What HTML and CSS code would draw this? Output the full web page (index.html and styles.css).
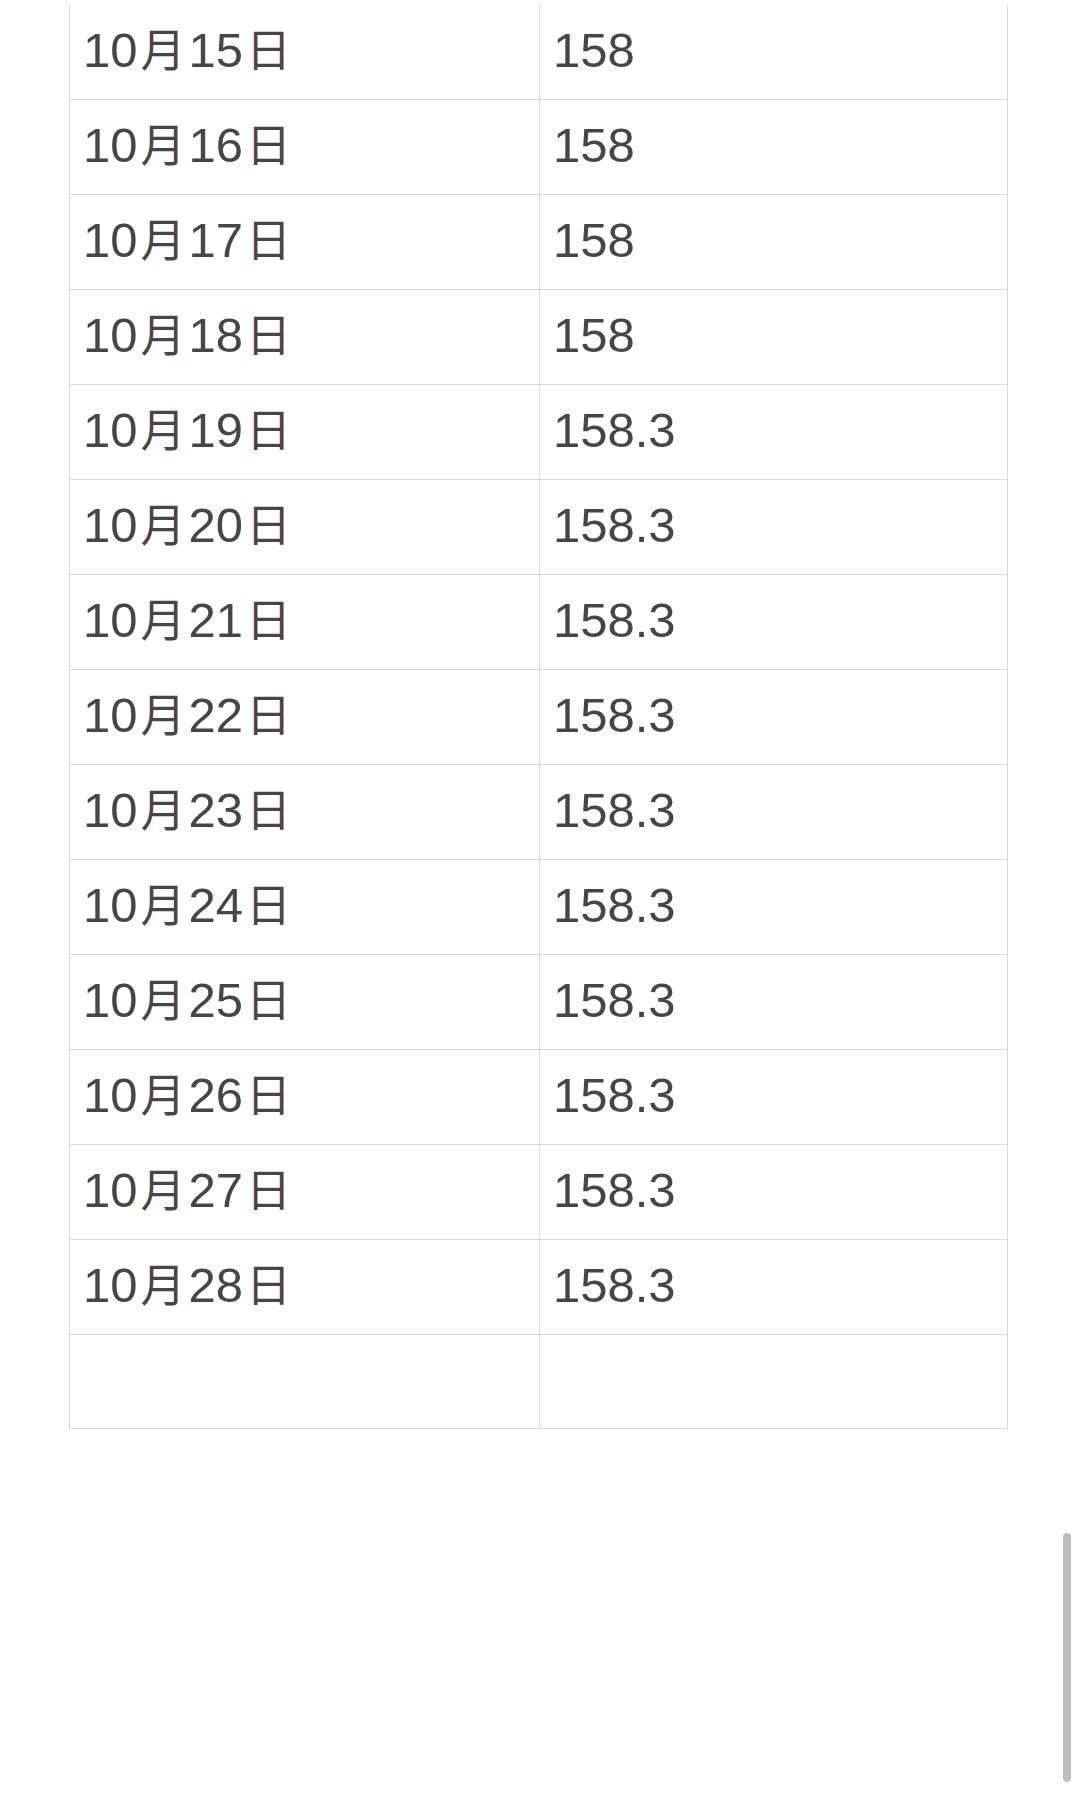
FILE: index.html
```html
<!DOCTYPE html>
<html lang="zh-CN">
<head>
<meta charset="utf-8">
<title>数据表</title>
<link rel="stylesheet" href="styles.css">
</head>
<body>
<div class="page">
  <table class="data">
    <colgroup><col class="c1"><col class="c2"></colgroup>
    <tbody>
      <tr><td>10<span class="u">月</span>15<span class="u">日</span></td><td>158</td></tr>
      <tr><td>10<span class="u">月</span>16<span class="u">日</span></td><td>158</td></tr>
      <tr><td>10<span class="u">月</span>17<span class="u">日</span></td><td>158</td></tr>
      <tr><td>10<span class="u">月</span>18<span class="u">日</span></td><td>158</td></tr>
      <tr><td>10<span class="u">月</span>19<span class="u">日</span></td><td>158.3</td></tr>
      <tr><td>10<span class="u">月</span>20<span class="u">日</span></td><td>158.3</td></tr>
      <tr><td>10<span class="u">月</span>21<span class="u">日</span></td><td>158.3</td></tr>
      <tr><td>10<span class="u">月</span>22<span class="u">日</span></td><td>158.3</td></tr>
      <tr><td>10<span class="u">月</span>23<span class="u">日</span></td><td>158.3</td></tr>
      <tr><td>10<span class="u">月</span>24<span class="u">日</span></td><td>158.3</td></tr>
      <tr><td>10<span class="u">月</span>25<span class="u">日</span></td><td>158.3</td></tr>
      <tr><td>10<span class="u">月</span>26<span class="u">日</span></td><td>158.3</td></tr>
      <tr><td>10<span class="u">月</span>27<span class="u">日</span></td><td>158.3</td></tr>
      <tr><td>10<span class="u">月</span>28<span class="u">日</span></td><td>158.3</td></tr>
      <tr class="empty"><td></td><td></td></tr>
    </tbody>
  </table>
</div>
<div class="scrollbar"></div>
</body>
</html>
```

FILE: styles.css
```css
html, body {
  margin: 0;
  padding: 0;
  background: #ffffff;
}
body {
  width: 1080px;
  height: 1806px;
  overflow: hidden;
  position: relative;
  font-family: "Liberation Sans", "Noto Sans CJK SC", sans-serif;
  color: #464646;
}
.page {
  padding-top: 5px;
  padding-left: 69px;
}
.data {
  border-collapse: separate;
  border-spacing: 0;
  table-layout: fixed;
  width: 939px;
}
.c1 { width: 471px; }
.c2 { width: 468px; }
.data td {
  box-sizing: border-box;
  height: 95px;
  padding: 17px 10px 0 13px;
  font-size: 49px;
  line-height: 56px;
  vertical-align: top;
  white-space: nowrap;
  overflow: hidden;
  border-right: 1px solid #d9d9d9;
  border-bottom: 1px solid #d9d9d9;
}
.data td:first-child {
  border-left: 1px solid #d9d9d9;
}
.data .u {
  font-family: "Noto Sans CJK SC", sans-serif;
  font-size: 45px;
  line-height: 0;
  margin: 0 3px;
}
.data .empty td {
  height: 94px;
}
.scrollbar {
  position: absolute;
  left: 1063px;
  top: 1533px;
  width: 8px;
  height: 249px;
  border-radius: 4px;
  background: #bdbdbd;
}
```
